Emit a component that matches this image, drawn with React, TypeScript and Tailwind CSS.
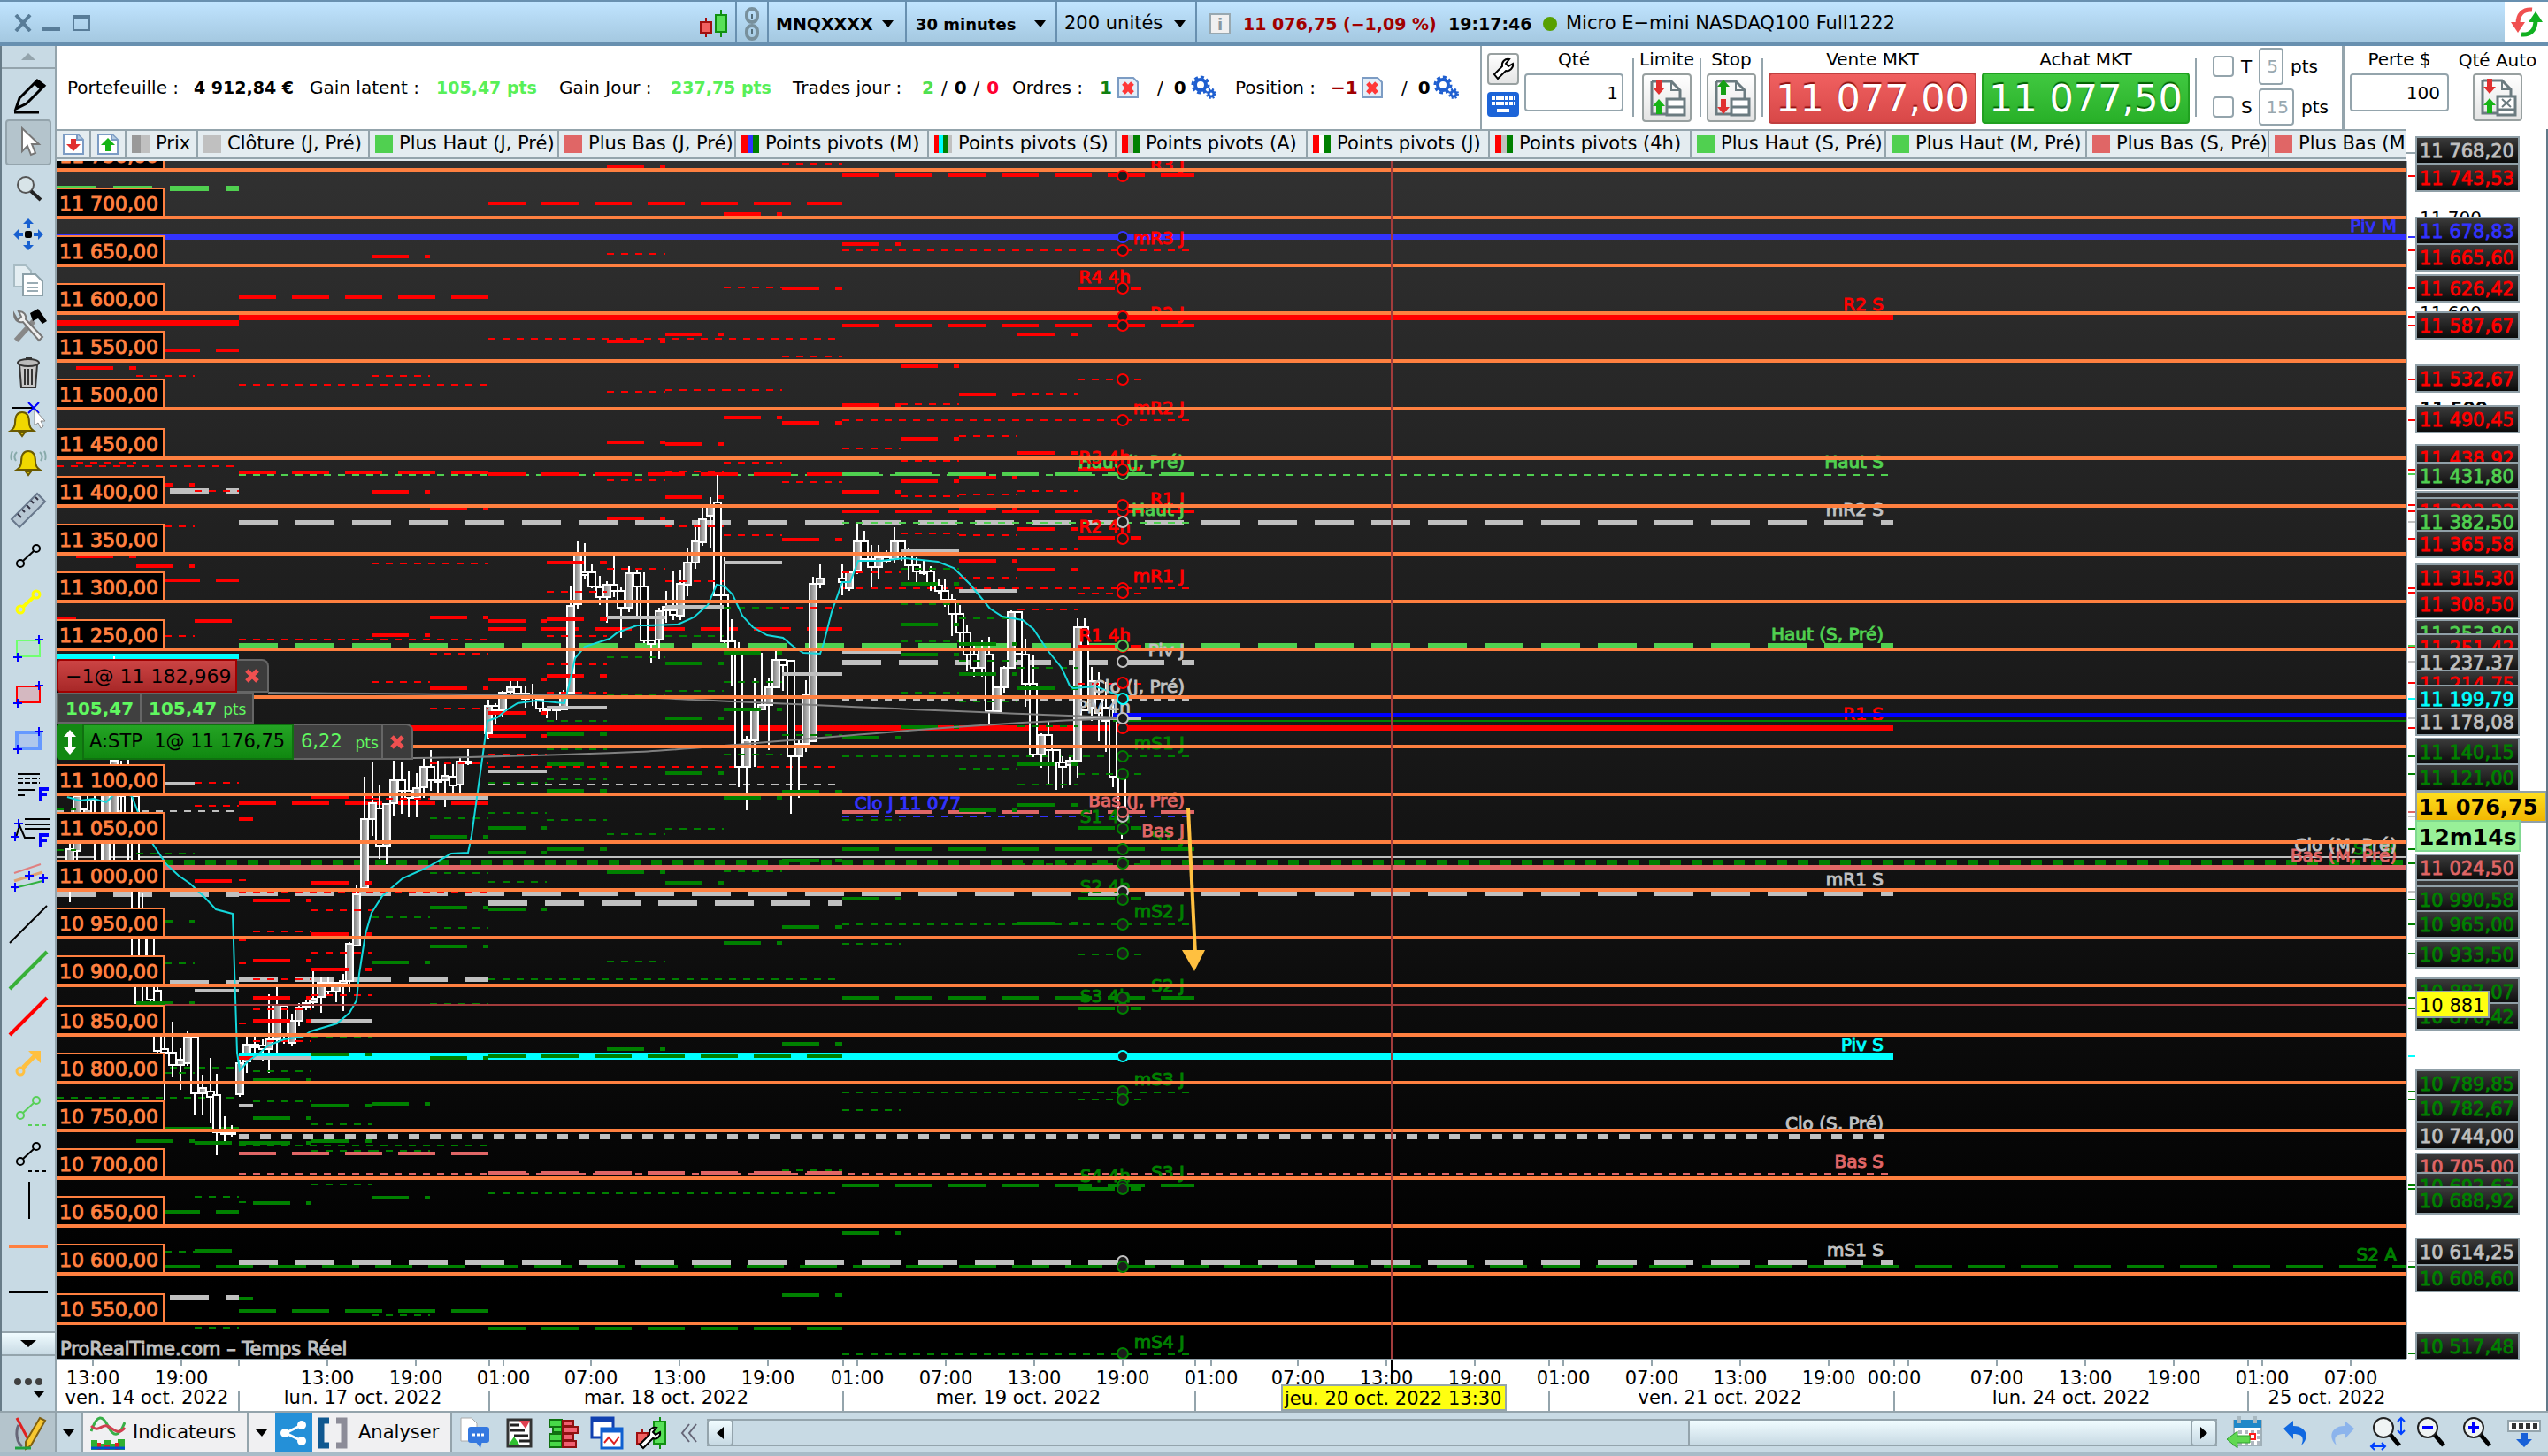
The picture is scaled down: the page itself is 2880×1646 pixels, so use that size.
import React, { useState, ReactNode } from 'react';

const RED = '#ff0000';
const GREEN = '#50d050';
const DARK_GREEN = '#008000';
const GRAY = '#c0c0c0';
const SALMON = '#e06666';
const CYAN = '#00ffff';
const BLUE = '#3333ff';
const ORANGE = '#ff8040';

type Style = 'long' | 'thin' | 'thick' | 'square' | 'solid' | 'bar' | 'line';
type Segment = [number, number, number, string, Style];

const strokes: Record<Style, { w: number; dash?: string }> = {
	long: { w: 4, dash: '42 18' },
	thin: { w: 2, dash: '8 8' },
	thick: { w: 6, dash: '44 20' },
	square: { w: 6, dash: '12 12' },
	solid: { w: 4 },
	bar: { w: 6 },
	line: { w: 2 }
};

// horizontal grid, one line every 50 points starting at 11 750
const gridLines = [
	192, 246, 300, 354, 408, 462, 518, 572, 626, 680, 734, 788, 844, 898, 952, 1006, 1060, 1114, 1170, 1224, 1278, 1332, 1386, 1440, 1496
];

// 4h pivots: [from, to, red long, red thin, green long, green thin, grey]
const columns: [number, number, number[], number[], number[], number[], number[]][] = [
	[64, 86, [699], [], [], [915, 961], []],
	[86, 154, [416, 629], [523], [], [], []],
	[154, 220, [548, 640], [425, 595, 719], [1042, 1134, 1290], [965, 1089, 1213, 1415], [886]],
	[220, 270, [702, 996], [555, 885, 911], [1292, 1414], [1353, 1501], [1120]],
	[270, 286, [926, 1196], [995, 1063, 1089, 1157], [1468, 1292], [1359], [1250]],
	[286, 352, [1018, 1086, 1128, 1154], [1053, 1107, 1141, 1177], [1221, 1264, 1292, 1360], [1211, 1245], [1196]],
	[352, 420, [901, 998, 1056, 1096], [1029, 1077, 1125], [1192, 1250, 1290], [1173, 1271, 1301, 1339], [1154]],
	[420, 486, [290, 556, 718], [425, 771, 903], [1088, 1248, 1354], [1037, 1301, 1487], []],
	[486, 552, [575, 698, 778], [739, 801, 863], [946, 1026, 1070, 1196], [925, 987, 1049, 1135], [902]],
	[552, 618, [702, 768, 806, 832], [853], [936, 964, 1028], [885, 919, 997], [872]],
	[618, 686, [636, 700, 764], [669, 719, 751, 783], [830, 864, 894, 960], [815, 847, 881, 927], [800]],
	[686, 752, [188, 386, 500, 586], [287, 443, 543, 643], [986, 1186], [743, 785, 943, 1087], [698]],
	[752, 818, [378, 502, 562], [441, 533, 595, 657], [750, 812, 874, 998], [719, 781, 937], [686]],
	[818, 884, [242, 472], [325, 441, 523, 605], [738, 802, 902, 1066], [687, 771, 853, 985], [636]],
	[884, 952, [326, 478, 610], [185, 403, 545, 687], [895, 973, 1048, 1180, 1464], [831, 1323], [762]],
	[952, 1018, [276, 458, 556], [507, 647], [834, 1016, 1394], [927, 1067, 1255], [737]],
	[1018, 1084, [414, 496, 544], [457, 521, 561, 603], [660, 706, 740, 822], [643, 683, 725, 783], [623]],
	[1084, 1150, [446, 540, 575, 634], [493, 559, 605, 653], [728, 762, 916], [699, 747, 793, 869], [668]],
	[1150, 1218, [378, 512, 598, 644], [445, 555, 621, 689], [778, 864, 910, 1044], [755, 821, 887, 977], []],
	[1218, 1290, [326, 530, 608, 731], [429, 671, 773], [936, 1016, 1140, 1344], [875, 977, 1079, 1243], [812]]
];

const levels: Segment[] = [
	// monthly
	[64, 2720, 268, BLUE, 'bar'],
	[64, 2720, 969, GRAY, 'line'],
	[64, 2720, 975, DARK_GREEN, 'square'],
	[64, 2720, 981, SALMON, 'bar'],
	// weekly
	[64, 270, 365, RED, 'bar'],
	[270, 2140, 359, RED, 'bar'],
	[270, 2140, 823, RED, 'bar'],
	[270, 2140, 537, GREEN, 'thin'],
	[270, 2140, 591, GRAY, 'thick'],
	[270, 2140, 730, GREEN, 'thick'],
	[270, 2140, 1010, GRAY, 'thick'],
	[64, 270, 742, CYAN, 'bar'],
	[270, 2140, 1285, GRAY, 'square'],
	[270, 2140, 1327, SALMON, 'thin'],
	[270, 2140, 1427, GRAY, 'thick'],
	[64, 2720, 1432, DARK_GREEN, 'long'],
	// daily
	[64, 270, 213, GREEN, 'thick'],
	[64, 270, 396, RED, 'long'],
	[64, 270, 527, RED, 'thin'],
	[64, 270, 555, GRAY, 'thick'],
	[64, 270, 656, RED, 'long'],
	[64, 270, 917, GRAY, 'thin'],
	[64, 270, 1011, GRAY, 'thick'],
	[64, 270, 1111, GRAY, 'thick'],
	[64, 270, 1207, DARK_GREEN, 'thin'],
	[64, 270, 1241, DARK_GREEN, 'thin'],
	[64, 270, 1276, DARK_GREEN, 'solid'],
	[64, 270, 1370, DARK_GREEN, 'long'],
	[64, 270, 1467, GRAY, 'thick'],
	[270, 552, 336, RED, 'long'],
	[270, 552, 435, RED, 'thin'],
	[270, 552, 534, RED, 'long'],
	[420, 552, 637, RED, 'thin'],
	[270, 552, 723, RED, 'thin'],
	[270, 552, 908, RED, 'long'],
	[270, 552, 1009, RED, 'thin'],
	[270, 552, 1107, GRAY, 'thick'],
	[270, 552, 1295, DARK_GREEN, 'thin'],
	[270, 552, 1304, SALMON, 'long'],
	[270, 552, 1482, DARK_GREEN, 'long'],
	[552, 952, 230, RED, 'long'],
	[552, 952, 383, RED, 'thin'],
	[552, 952, 536, RED, 'long'],
	[552, 952, 711, RED, 'long'],
	[552, 952, 867, RED, 'thin'],
	[552, 952, 887, GRAY, 'thin'],
	[552, 952, 1021, GRAY, 'thick'],
	[552, 952, 1107, DARK_GREEN, 'thin'],
	[552, 952, 1326, SALMON, 'long'],
	[552, 952, 1349, DARK_GREEN, 'thin'],
	[552, 952, 1502, DARK_GREEN, 'long'],
	[952, 1350, 198, RED, 'long'],
	[952, 1350, 283, RED, 'thin'],
	[952, 1350, 368, RED, 'long'],
	[952, 1350, 475, RED, 'thin'],
	[952, 1350, 536, GREEN, 'long'],
	[952, 1350, 578, RED, 'long'],
	[952, 1350, 591, GREEN, 'thin'],
	[952, 1350, 665, RED, 'thin'],
	[952, 1350, 749, GRAY, 'thick'],
	[952, 1350, 791, GRAY, 'thin'],
	[952, 1350, 855, DARK_GREEN, 'thin'],
	[952, 1350, 918, SALMON, 'long'],
	[952, 1350, 923, BLUE, 'thin'],
	[952, 1350, 960, DARK_GREEN, 'long'],
	[952, 1350, 1045, DARK_GREEN, 'thin'],
	[952, 1350, 1128, DARK_GREEN, 'long'],
	[952, 1350, 1235, DARK_GREEN, 'thin'],
	[952, 1350, 1340, DARK_GREEN, 'long'],
	[952, 1350, 1531, DARK_GREEN, 'thin']
];

// [x, high, low, body top, body bottom, rising]
const candles: [number, number, number, number, number, number][] = [
	[79, 940, 1020, 960, 975, 1], [87, 890, 975, 900, 962, 1], [95, 880, 930, 890, 915, 0], [103, 880, 925, 890, 905, 0],
	[111, 880, 990, 890, 980, 0], [120, 870, 985, 890, 975, 1], [129, 742, 975, 860, 940, 1], [137, 860, 930, 880, 900, 0],
	[145, 850, 980, 880, 950, 0], [153, 880, 1135, 900, 1100, 0], [161, 1010, 1135, 1030, 1110, 0], [170, 1050, 1140, 1060, 1130, 0],
	[178, 1110, 1190, 1120, 1188, 0], [186, 1142, 1245, 1186, 1190, 0], [195, 1155, 1218, 1190, 1204, 0], [204, 1185, 1232, 1198, 1204, 1],
	[212, 1166, 1205, 1172, 1202, 1], [220, 1170, 1260, 1172, 1236, 0], [229, 1215, 1260, 1230, 1236, 1], [238, 1196, 1270, 1234, 1240, 0],
	[245, 1214, 1306, 1238, 1280, 0], [254, 1262, 1290, 1280, 1282, 0], [262, 1272, 1285, 1280, 1282, 0], [271, 1198, 1240, 1202, 1237, 1],
	[279, 1171, 1213, 1181, 1200, 1], [288, 1168, 1190, 1181, 1184, 0], [297, 1175, 1200, 1182, 1186, 0], [304, 1124, 1213, 1175, 1186, 1],
	[313, 1116, 1190, 1136, 1175, 1], [321, 1135, 1180, 1137, 1170, 0], [330, 1146, 1183, 1154, 1179, 1], [338, 1134, 1160, 1139, 1154, 1],
	[346, 1130, 1142, 1134, 1138, 1], [354, 1098, 1140, 1129, 1133, 1], [363, 1104, 1145, 1111, 1127, 1], [371, 1104, 1125, 1111, 1121, 0],
	[380, 1110, 1133, 1111, 1121, 1], [388, 1101, 1143, 1109, 1112, 1], [395, 1065, 1121, 1067, 1109, 1], [403, 1001, 1070, 1011, 1069, 1],
	[412, 878, 1005, 926, 1004, 1], [421, 862, 945, 908, 926, 1], [429, 888, 971, 914, 956, 0], [437, 908, 977, 909, 956, 1],
	[445, 860, 922, 882, 908, 1], [454, 862, 920, 882, 894, 0], [462, 872, 924, 894, 902, 0], [471, 874, 924, 891, 902, 1],
	[479, 858, 902, 867, 890, 1], [487, 848, 894, 867, 882, 0], [495, 860, 900, 882, 884, 0], [503, 864, 912, 877, 882, 1],
	[512, 864, 902, 878, 888, 0], [520, 856, 900, 861, 887, 1], [529, 847, 865, 861, 863, 0], [552, 791, 835, 798, 829, 1],
	[560, 795, 818, 798, 803, 0], [568, 781, 811, 783, 803, 1], [577, 769, 784, 777, 782, 1], [585, 769, 785, 777, 784, 0],
	[594, 775, 800, 784, 790, 0], [602, 773, 798, 785, 789, 0], [610, 788, 805, 791, 801, 0], [618, 800, 812, 801, 803, 0],
	[629, 800, 814, 801, 803, 0], [637, 780, 803, 783, 802, 1], [645, 663, 783, 685, 783, 1], [653, 612, 688, 628, 683, 1],
	[661, 614, 654, 647, 650, 0], [669, 638, 665, 647, 663, 0], [678, 651, 684, 664, 675, 0], [686, 657, 704, 661, 675, 1],
	[694, 628, 675, 661, 668, 0], [702, 664, 721, 668, 687, 0], [711, 640, 692, 648, 687, 1], [720, 644, 700, 648, 663, 0],
	[728, 647, 727, 663, 724, 0], [736, 723, 749, 724, 728, 0], [745, 687, 745, 691, 723, 1], [753, 668, 704, 686, 690, 1],
	[761, 646, 701, 690, 695, 0], [769, 644, 701, 660, 696, 1], [777, 620, 674, 636, 661, 1], [786, 595, 643, 612, 636, 1],
	[794, 573, 617, 587, 613, 1], [803, 562, 620, 573, 583, 1], [811, 537, 673, 568, 673, 0], [819, 630, 727, 673, 725, 0],
	[827, 700, 776, 725, 740, 0], [835, 726, 890, 740, 867, 0], [844, 832, 916, 837, 867, 1], [853, 766, 867, 803, 837, 1],
	[861, 738, 803, 797, 802, 1], [869, 767, 848, 777, 797, 1], [877, 736, 777, 746, 777, 1], [885, 745, 781, 746, 752, 0],
	[894, 746, 920, 747, 855, 0], [903, 835, 902, 841, 855, 1], [911, 769, 850, 785, 841, 1], [919, 652, 838, 660, 838, 1],
	[927, 638, 665, 654, 660, 1], [952, 638, 673, 654, 658, 0], [960, 645, 668, 647, 665, 1], [969, 592, 649, 612, 645, 1],
	[977, 600, 634, 612, 632, 0], [985, 616, 664, 632, 641, 0], [993, 616, 654, 630, 641, 1], [1002, 622, 637, 630, 634, 0],
	[1011, 596, 636, 612, 632, 1], [1019, 610, 634, 612, 628, 0], [1027, 620, 656, 628, 639, 0], [1036, 630, 658, 639, 646, 0],
	[1044, 634, 650, 646, 648, 0], [1052, 640, 668, 646, 662, 0], [1061, 655, 672, 662, 668, 0], [1068, 654, 686, 668, 678, 0],
	[1076, 672, 719, 678, 694, 0], [1085, 684, 735, 694, 715, 0], [1093, 706, 759, 715, 740, 0], [1101, 730, 765, 740, 755, 0],
	[1110, 724, 765, 735, 755, 1], [1118, 720, 818, 740, 804, 0], [1127, 775, 806, 777, 804, 1], [1135, 753, 783, 755, 777, 1],
	[1143, 690, 755, 692, 755, 1], [1151, 692, 739, 692, 739, 0], [1159, 722, 799, 740, 773, 0], [1168, 740, 856, 773, 853, 0],
	[1177, 829, 868, 831, 853, 1], [1185, 816, 886, 831, 848, 0], [1194, 848, 893, 848, 862, 0], [1201, 855, 891, 862, 867, 0],
	[1209, 856, 888, 860, 865, 1], [1218, 699, 880, 709, 860, 1], [1226, 699, 803, 709, 803, 0], [1234, 754, 815, 770, 800, 1],
	[1242, 760, 838, 790, 806, 0], [1250, 771, 850, 800, 815, 0], [1258, 790, 890, 812, 878, 0], [1268, 876, 949, 878, 923, 0]
];

const average =
	'76,901 90,905 106,903 120,907 133,894 149,900 156,918 172,953 188,977 202,990 215,999 230,1013 244,1028 263,1033 268,1190 271,1210 280,1200 294,1190 303,1182 321,1175 342,1172 351,1166 381,1157 395,1145 403,1131 406,1101 413,1056 420,1032 432,1013 455,993 482,981 510,965 529,964 533,945 551,815 562,811 572,803 585,795 606,792 638,795 643,775 650,744 661,731 689,722 698,715 720,707 731,707 766,706 784,698 800,684 810,661 819,663 828,672 839,696 851,709 867,718 885,721 897,731 908,738 927,739 931,727 940,692 952,658 961,658 970,634 995,634 1023,631 1060,635 1078,642 1096,660 1119,688 1133,697 1156,701 1168,711 1184,735 1200,755 1209,775 1213,778 1239,776 1269,788';

// markers on the last bar, they also give the ticks of the price axis
const markers: [number, string][] = [
	[199, RED], [268, BLUE], [283, RED], [326, RED], [358, RED], [368, RED], [429, RED], [475, RED], [536, GREEN], [531, RED],
	[578, RED], [571, RED], [590, GRAY], [609, RED], [665, RED], [670, RED], [731, RED], [730, GREEN], [748, GRAY], [772, RED],
	[790, CYAN], [823, RED], [812, GRAY], [855, DARK_GREEN], [875, DARK_GREEN], [923, GRAY], [918, SALMON], [937, DARK_GREEN],
	[960, DARK_GREEN], [976, DARK_GREEN], [1008, GRAY], [1017, DARK_GREEN], [1045, DARK_GREEN], [1078, DARK_GREEN],
	[1128, DARK_GREEN], [1140, DARK_GREEN], [1194, CYAN], [1234, DARK_GREEN], [1243, DARK_GREEN], [1340, DARK_GREEN],
	[1344, DARK_GREEN], [1426, GRAY], [1432, DARK_GREEN], [1530, DARK_GREEN]
];

// right aligned names
const names: [string, number, number, string][] = [
	['R3 J', 1339, 193, RED], ['mR3 J', 1339, 276, RED], ['R2 J', 1339, 361, RED], ['mR2 J', 1339, 468, RED],
	['Haut (J, Pré)', 1339, 529, GREEN], ['R1 J', 1339, 571, RED], ['Haut J', 1339, 583, GREEN], ['mR1 J', 1339, 658, RED],
	['Piv J', 1339, 742, GRAY], ['Clo (J, Pré)', 1339, 783, GRAY], ['mS1 J', 1339, 847, DARK_GREEN],
	['Bas (J, Pré)', 1339, 912, SALMON], ['S1 J', 1339, 953, DARK_GREEN], ['Bas J', 1339, 946, SALMON],
	['mS2 J', 1339, 1037, DARK_GREEN], ['S2 J', 1339, 1121, DARK_GREEN], ['mS3 J', 1339, 1227, DARK_GREEN],
	['S3 J', 1339, 1332, DARK_GREEN], ['mS4 J', 1339, 1524, DARK_GREEN],
	['R4 4h', 1278, 320, RED], ['R3 4h', 1278, 524, RED], ['R2 4h', 1278, 602, RED], ['R1 4h', 1278, 725, RED],
	['Piv 4h', 1278, 806, GRAY], ['S1 4h', 1278, 930, DARK_GREEN], ['S2 4h', 1278, 1009, DARK_GREEN],
	['S3 4h', 1278, 1133, DARK_GREEN], ['S4 4h', 1278, 1336, DARK_GREEN],
	['Clo J 11 077', 1086, 915, BLUE],
	['R2 S', 2129, 351, RED], ['Haut S', 2129, 529, GREEN], ['mR2 S', 2129, 583, GRAY], ['Haut (S, Pré)', 2129, 724, GREEN],
	['R1 S', 2129, 814, RED], ['mR1 S', 2129, 1001, GRAY], ['Piv S', 2129, 1188, CYAN], ['Clo (S, Pré)', 2129, 1277, GRAY],
	['Bas S', 2129, 1320, SALMON], ['mS1 S', 2129, 1420, GRAY],
	['Piv M', 2709, 262, BLUE], ['S1 M', 2709, 966, DARK_GREEN], ['Bas (M, Pré)', 2709, 974, SALMON], ['Clo (M, Pré)', 2709, 962, GRAY],
	['S2 A', 2709, 1425, DARK_GREEN]
];

const tags: [string, number, string][] = [
	['11 768,20', 154, GRAY], ['11 743,53', 185, RED], ['11 678,83', 245, BLUE], ['11 665,60', 275, RED], ['11 626,42', 310, RED],
	['11 587,67', 352, RED], ['11 532,67', 412, RED], ['11 490,45', 458, RED], ['11 438,92', 502, RED], ['11 431,80', 522, GREEN],
	['11 398,42', 555, RED], ['11 393,33', 562, RED], ['11 382,50', 574, GREEN], ['11 365,58', 599, RED], ['11 315,30', 637, RED],
	['11 308,50', 667, RED], ['11 253,80', 700, GREEN], ['11 251,42', 716, RED], ['11 237,37', 733, GRAY], ['11 214,75', 757, RED],
	['11 199,79', 774, CYAN], ['11 178,08', 800, GRAY], ['11 140,15', 834, DARK_GREEN], ['11 121,00', 863, DARK_GREEN],
	['11 024,50', 965, SALMON], ['10 999,00', 994, GRAY], ['10 990,58', 1001, DARK_GREEN], ['10 965,00', 1029, DARK_GREEN],
	['10 933,50', 1063, DARK_GREEN], ['10 887,07', 1105, DARK_GREEN], ['10 876,42', 1133, DARK_GREEN],
	['10 789,85', 1209, DARK_GREEN], ['10 782,67', 1237, DARK_GREEN], ['10 744,00', 1268, GRAY], ['10 705,00', 1303, SALMON],
	['10 692,63', 1325, DARK_GREEN], ['10 688,92', 1341, DARK_GREEN], ['10 614,25', 1399, GRAY], ['10 608,60', 1429, DARK_GREEN],
	['10 517,48', 1506, DARK_GREEN]
];

const hours: [string, number][] = [
	['13:00', 105], ['19:00', 205], ['13:00', 370], ['19:00', 470], ['01:00', 569], ['07:00', 668], ['13:00', 768], ['19:00', 868],
	['01:00', 969], ['07:00', 1069], ['13:00', 1169], ['19:00', 1269], ['01:00', 1369], ['07:00', 1467], ['13:00', 1567],
	['19:00', 1667], ['01:00', 1767], ['07:00', 1867], ['13:00', 1967], ['19:00', 2067], ['00:00', 2141], ['', 2157],
	['07:00', 2257], ['13:00', 2357], ['19:00', 2457], ['01:00', 2557], ['07:00', 2657]
];

const days: [string, number][] = [
	['ven. 14 oct. 2022', 166], ['lun. 17 oct. 2022', 410], ['mar. 18 oct. 2022', 753], ['mer. 19 oct. 2022', 1151],
	['ven. 21 oct. 2022', 1944], ['lun. 24 oct. 2022', 2341], ['25 oct. 2022', 2630]
];

const legend: { name: string; width: string; colors: string[] }[] = [
	{ name: 'Prix', width: 'w-[81px]', colors: ['#999999', GRAY] },
	{ name: 'Clôture (J, Pré)', width: 'w-[194px]', colors: [GRAY] },
	{ name: 'Plus Haut (J, Pré)', width: 'w-[214px]', colors: [GREEN] },
	{ name: 'Plus Bas (J, Pré)', width: 'w-[200px]', colors: [SALMON] },
	{ name: 'Points pivots (M)', width: 'w-[218px]', colors: [RED, BLUE, DARK_GREEN] },
	{ name: 'Points pivots (S)', width: 'w-[212px]', colors: [RED, CYAN, DARK_GREEN, GRAY] },
	{ name: 'Points pivots (A)', width: 'w-[216px]', colors: [RED, GRAY, DARK_GREEN] },
	{ name: 'Points pivots (J)', width: 'w-[206px]', colors: [RED, '#ffffff', DARK_GREEN] },
	{ name: 'Points pivots (4h)', width: 'w-[228px]', colors: [RED, GRAY, DARK_GREEN] },
	{ name: 'Plus Haut (S, Pré)', width: 'w-[220px]', colors: [GREEN] },
	{ name: 'Plus Haut (M, Pré)', width: 'w-[227px]', colors: [GREEN] },
	{ name: 'Plus Bas (S, Pré)', width: 'w-[206px]', colors: [SALMON] },
	{ name: 'Plus Bas (M, Pré)', width: 'w-[214px]', colors: [SALMON] }
];

function formatLevel(i: number): string {
	const value = 11750 - i * 50;
	return `${Math.floor(value / 1000)} ${String(value % 1000).padStart(3, '0')},00`;
}

function Svg({ w = 48, h = 48, children }: { w?: number; h?: number; children: ReactNode }) {
	return (
		<svg width={w} height={h} viewBox={`0 0 ${w} ${h}`} fill="none" className="block shrink-0" aria-hidden="true">
			{children}
		</svg>
	);
}

function Caret() {
	return (
		<Svg w={14} h={10}>
			<path d="M0 1h13l-6 8z" fill="#000" />
		</Svg>
	);
}

function DeleteIcon() {
	return (
		<Svg w={26} h={26}>
			<path d="M2 2h17l5 5v17H2z" fill="#e4eef8" stroke="#7c9cc4" strokeWidth="2" />
			<path d="M8 8l10 11M18 8L8 19" stroke="#ff3838" strokeWidth="5" />
		</Svg>
	);
}

function GearsIcon() {
	return (
		<Svg w={30} h={28}>
			<circle cx="11" cy="11" r="6" stroke="#1f5fd0" strokeWidth="4" />
			<circle cx="11" cy="11" r="9" stroke="#1f5fd0" strokeWidth="3" strokeDasharray="4 3" />
			<circle cx="23" cy="21" r="3" stroke="#1f5fd0" strokeWidth="3" />
			<circle cx="23" cy="21" r="5" stroke="#1f5fd0" strokeWidth="2" strokeDasharray="2 2" />
		</Svg>
	);
}

function PageArrow({ up }: { up?: boolean }) {
	return (
		<Svg w={26} h={26}>
			<path d="M2 2h16l6 6v16H2z" fill="#fff" stroke="#7c9cc4" strokeWidth="2" />
			<path d="M17 2v6h7" fill="#b4cce4" stroke="#7c9cc4" strokeWidth="2" />
			{up ? (
				<path d="M13 6l8 8h-5v7h-6v-7H5z" fill="#16b416" />
			) : (
				<path d="M13 21l8-8h-5V7h-6v6H5z" fill="#e03030" />
			)}
		</Svg>
	);
}

function OrderIcon({ first, second, auto }: { first: string; second: string; auto?: boolean }) {
	return (
		<Svg w={46} h={46}>
			<path d="M6 4h22l10 10v9M6 4v37h17" stroke="#6b7b80" strokeWidth="3" />
			<path d="M28 4v10h10" stroke="#6b7b80" strokeWidth="2" />
			<path d={first === 'down' ? 'M11 2h6v9h4l-7 8-7-8h4z' : 'M11 19h6v-9h4l-7-8-7 8h4z'} fill={first === 'down' ? '#e03030' : '#16a016'} />
			<path d={second === 'down' ? 'M11 24h6v9h4l-7 8-7-8h4z' : 'M11 41h6v-9h4l-7-8-7 8h4z'} fill={second === 'down' ? '#e03030' : '#16b416'} />
			{auto ? (
				<>
					<path d="M23 22h20v15H23zM23 37h20v6H23z" fill="#fff" stroke="#6b7b80" strokeWidth="3" />
					<path d="M28 25l10 9M38 25l-10 9" stroke="#6b7b80" strokeWidth="2" />
				</>
			) : (
				<path d="M23 24h20v9H23zM23 33h20v9H23z" fill="#fff" stroke="#6b7b80" strokeWidth="3" />
			)}
		</Svg>
	);
}

function Plus({ x, y }: { x: number; y: number }) {
	return <path d={`M${x - 5} ${y}h10M${x} ${y - 5}v10`} stroke="#0000ff" strokeWidth="2" />;
}

function Segment2({ color, dots, wide }: { color: string; dots?: boolean; wide?: boolean }) {
	return (
		<Svg>
			<circle cx="15" cy="32" r="4" stroke={color} strokeWidth={wide ? 3 : 2} />
			<circle cx="33" cy="15" r="4" stroke={color} strokeWidth={wide ? 3 : 2} />
			<path d="M18 29L30 18" stroke={color} strokeWidth={wide ? 4 : 2} />
			{dots && <path d="M24 43h20" stroke={color} strokeWidth="2" strokeDasharray="4 4" />}
		</Svg>
	);
}

function Zone({ stroke, fill, w }: { stroke: string; fill: string; w: number }) {
	return (
		<Svg>
			<rect x="11" y="15" width="26" height="18" fill={fill} stroke={stroke} strokeWidth={w} />
			<Plus x={36} y={14} />
			<Plus x={12} y={34} />
		</Svg>
	);
}

const Bell = () => (
	<path d="M24 9c7 0 8 6 8 12 0 5 2 7 5 9H11c3-2 5-4 5-9 0-6 1-12 8-12zM21 32h6l-3 4z" fill="#f0d800" stroke="#6a5a00" strokeWidth="2" />
);

const tools: [string, ReactNode][] = [
	['Dessiner', <Svg><path d="M10 38l4-12L34 6l8 6-20 20zM8 42h28" stroke="#000" strokeWidth="3" /><path d="M30 10l5-5 8 6-5 6z" fill="#000" /></Svg>],
	['Curseur', <Svg><path d="M17 8v26l6-6 4 10 5-2-4-10h8z" fill="#fff" stroke="#777" strokeWidth="2" /></Svg>],
	['Zoom', <Svg><circle cx="21" cy="20" r="9" fill="#d8e4e8" stroke="#555" strokeWidth="2" /><path d="M27 27l11 10" stroke="#222" strokeWidth="4" /></Svg>],
	['Déplacer', <Svg><rect x="20" y="20" width="8" height="8" fill="#000" rx="2" /><path d="M24 6l6 6h-4v5h-4v-5h-4zM24 42l6-6h-4v-5h-4v5h-4zM7 24l6-6v4h5v4h-5v4zM41 24l-6-6v4h-5v4h5v4z" fill="#1860d0" /></Svg>],
	['Copier', <Svg><path d="M8 7h13l6 6v18H8z" fill="#e4eef2" stroke="#a8bcc4" strokeWidth="2" /><path d="M18 17h14l8 8v16H18z" fill="#fff" stroke="#8ca0a8" strokeWidth="2" /><path d="M23 27h12M23 32h12M23 36h12" stroke="#9aacb4" strokeWidth="2" /></Svg>],
	['Outils', <Svg><path d="M10 40l20-22" stroke="#888" strokeWidth="6" /><path d="M8 10c0 8 6 10 10 9l18 21 4-4-19-20c1-5-2-9-8-9l3 6-4 4z" fill="#eee" stroke="#777" strokeWidth="2" /><path d="M26 9l9-5 10 14-5 3-5-6-6 3z" fill="#000" /></Svg>],
	['Supprimer', <Svg><path d="M14 15h20l-2 26H16z" fill="#c8c8c8" stroke="#333" strokeWidth="2" /><ellipse cx="24" cy="13" rx="12" ry="4" fill="#bbb" stroke="#333" strokeWidth="2" /><path d="M20 20v18M24 20v18M28 20v18M21 8h7" stroke="#333" strokeWidth="2" /></Svg>],
	['Alerte au clic', <Svg><g transform="translate(-7 8)"><Bell /></g><path d="M5 12h26" stroke="#000" strokeWidth="2" /><path d="M24 6l12 12M36 6L24 18" stroke="#0000ff" strokeWidth="2" /><path d="M31 14v18l4-3 3 6 3-2-3-6h5z" fill="#fff" stroke="#888" /></Svg>],
	['Alerte', <Svg><Bell /><path d="M11 10c-3 3-3 7-1 10M6 9c-2 4-2 7-1 10M37 10c3 3 3 7 1 10M42 9c2 4 2 7 1 10" stroke="#8aa" strokeWidth="2" /></Svg>],
	['Règle', <Svg><path d="M5 34L34 5l9 9-29 29z" fill="#b8c8d4" stroke="#68788c" strokeWidth="2" /><path d="M12 28l4 4M17 23l3 3M22 18l4 4M27 13l3 3M32 9l3 3" stroke="#334" strokeWidth="2" /></Svg>],
	['Segment', <Segment2 color="#000" />],
	['Segment jaune', <Segment2 color="#ffff00" wide />],
	['Zone verte', <Zone stroke="#70ff70" fill="#bce0d4" w={2} />],
	['Zone rouge', <Zone stroke="#ff0000" fill="#d4b8c0" w={2} />],
	['Zone bleue', <Zone stroke="#6699ff" fill="#b0c8ec" w={4} />],
	['Texte', <Svg><path d="M12 10h25M12 28h20M12 34h8" stroke="#000" strokeWidth="2" /><path d="M12 15h25M12 20h25" stroke="#000" strokeWidth="2" strokeDasharray="6 2" /><path d="M38 40V27h9M38 33h7" stroke="#0000ff" strokeWidth="4" /></Svg>],
	['Texte ancré', <Svg><path d="M20 9h28M20 15h28M20 20h28M10 30l4-14 6 14h12" stroke="#000" strokeWidth="2" /><path d="M38 40V27h9M38 33h7" stroke="#0000ff" strokeWidth="4" /><Plus x={13} y={14} /><Plus x={9} y={29} /></Svg>],
	['Canal', <Svg><path d="M8 18l30-10" stroke="#e08080" strokeWidth="2" /><path d="M8 27l32-10" stroke="#e0a070" strokeWidth="3" /><path d="M8 35l32-8" stroke="#30b040" strokeWidth="2" /><Plus x={25} y={21} /><Plus x={41} y={24} /><Plus x={9} y={34} /></Svg>],
	['Droite', <Svg><path d="M3 45L45 3" stroke="#000" strokeWidth="2" /></Svg>],
	['Droite verte', <Svg><path d="M3 45L45 3" stroke="#38b038" strokeWidth="4" /></Svg>],
	['Droite rouge', <Svg><path d="M3 45L45 3" stroke="#ff0000" strokeWidth="4" /></Svg>],
	['Flèche', <Svg><circle cx="15" cy="34" r="4" stroke="#ffc040" strokeWidth="3" /><path d="M18 30l14-14" stroke="#ffc040" strokeWidth="5" /><path d="M24 11h14v14z" fill="#ffc040" /></Svg>],
	['Segment vert', <Segment2 color="#58d058" dots />],
	['Segment pointillé', <Segment2 color="#000" dots />],
	['Verticale', <Svg><path d="M25 3v42" stroke="#000" strokeWidth="2" /></Svg>],
	['Horizontale orange', <Svg><path d="M2 24h44" stroke="#ff8040" strokeWidth="4" /></Svg>],
	['Horizontale', <Svg><path d="M2 24h44" stroke="#000" strokeWidth="2" /></Svg>]
];

function Level({ segment }: { segment: Segment }) {
	const [x1, x2, y, color, style] = segment;
	return <line x1={x1} x2={x2} y1={y} y2={y} stroke={color} strokeWidth={strokes[style].w} strokeDasharray={strokes[style].dash} />;
}

function Plot() {
	return (
		<svg viewBox="64 182 2656 1354" className="block h-auto w-full" role="img" aria-label="MNQXXXX 30 minutes">
			<defs>
				<linearGradient id="night" x1="0" y1="0" x2="0" y2="1">
					<stop offset="0" stopColor="#313131" />
					<stop offset="0.94" stopColor="#000000" />
				</linearGradient>
				<linearGradient id="rise" x1="0" y1="0" x2="1" y2="0">
					<stop offset="0" stopColor="#777777" />
					<stop offset="1" stopColor="#cccccc" />
				</linearGradient>
			</defs>
			<rect x="64" y="182" width="2656" height="1354" fill="url(#night)" />
			{levels.map((s, i) => (
				<Level key={i} segment={s} />
			))}
			{candles.map(([x, high, low, top, bottom, up]) => (
				<g key={x} stroke="#ffffff" strokeWidth="2">
					<path d={`M${x} ${high}V${top}M${x} ${bottom}V${low}`} />
					<rect x={x - 4} y={top} width="8" height={bottom - top} fill={up ? 'url(#rise)' : '#0c0c0c'} />
				</g>
			))}
			<rect x="270" y="1190" width="1870" height="8" fill={CYAN} />
			<Level segment={[552, 952, 1194, DARK_GREEN, 'long']} />
			{columns.map(([x1, x2, redLong, redThin, greenLong, greenThin, grey]) => (
				<g key={x1}>
					{grey.map(y => <Level key={y} segment={[x1, x2, y, GRAY, 'solid']} />)}
					{redLong.map(y => <Level key={y} segment={[x1, x2, y, RED, 'long']} />)}
					{redThin.map(y => <Level key={y} segment={[x1, x2, y, RED, 'thin']} />)}
					{greenLong.map(y => <Level key={y} segment={[x1, x2, y, DARK_GREEN, 'long']} />)}
					{greenThin.map(y => <Level key={y} segment={[x1, x2, y, DARK_GREEN, 'thin']} />)}
				</g>
			))}
			<polyline points={average} fill="none" stroke="#14d8dc" strokeWidth="2" />
			<g fontSize="20" textAnchor="end" strokeWidth="1">
				{names.map(([name, x, y, color]) => (
					<text key={name + x} x={x} y={y} fill={color} stroke={color}>
						{name}
					</text>
				))}
			</g>
			<path d="M303 783C500 785 650 785 720 788S1100 806 1269 811M467 857C560 856 640 853 720 850S1080 817 1269 812" stroke="#808080" strokeWidth="2" fill="none" />
			{gridLines.map((y, i) => (
				<g key={y}>
					<path d={`M64 ${y}H2720`} stroke={ORANGE} strokeWidth="4" />
					<rect x="62" y={y - 33} width="123" height="33" fill="#000000" stroke={ORANGE} strokeWidth="2" />
					<path d={`M64 ${y}H186`} stroke={ORANGE} strokeWidth="4" />
					<text x="67" y={y - 8} fontSize="22" fill={ORANGE} stroke={ORANGE} strokeWidth="1">
						{formatLevel(i)}
					</text>
				</g>
			))}
			<path d="M1258 808H2720" stroke="#0000ff" strokeWidth="4" />
			<path d="M1258 815H2720" stroke={DARK_GREEN} strokeWidth="2" />
			{markers.map(([y, color]) => (
				<circle key={y} cx="1269" cy={y} r="6" fill="#1c1c1c" stroke={color} strokeWidth="2" />
			))}
			<path d="M1343 914L1351 1078" stroke="#ffc040" strokeWidth="4" />
			<path d="M1336 1074h26l-12 24z" fill="#ffc040" />
			<path d="M1573 182V1536M186 1136H2720" stroke="#a23c3c" strokeWidth="2" />
			<text x="68" y="1532" fontSize="21" fill={GRAY} stroke={GRAY} strokeWidth="1">
				ProRealTime.com – Temps Réel
			</text>
		</svg>
	);
}

function PriceAxis() {
	return (
		<svg viewBox="2720 146 160 1449" className="block h-auto w-full" role="img" aria-label="Échelle des prix">
			<defs>
				<linearGradient id="tag" x1="0" y1="0" x2="0" y2="1">
					<stop offset="0" stopColor="#3c3c3c" />
					<stop offset="1" stopColor="#080808" />
				</linearGradient>
				<linearGradient id="gold" x1="0" y1="0" x2="0" y2="1">
					<stop offset="0" stopColor="#ffe020" />
					<stop offset="1" stopColor="#f0b400" />
				</linearGradient>
			</defs>
			<rect x="2720" y="146" width="160" height="1449" fill="#ffffff" />
			<path d="M2720 182V1536M2720 173h10" stroke="#94a4ac" strokeWidth="2" />
			{markers.map(([y, color]) => (
				<path key={y} d={`M2722 ${y}h8`} stroke={color} strokeWidth="2" />
			))}
			<g fontSize="20">
				<text x="2735" y="253">11 700</text>
				<text x="2735" y="360">11 600</text>
				<text x="2735" y="468" fontWeight="bold">11 500</text>
			</g>
			{tags.map(([value, y, color]) => (
				<g key={value}>
					<rect x="2731" y={y + 1} width="116" height="30" fill="url(#tag)" stroke="#90a0a8" strokeWidth="2" />
					<text x="2735" y={y + 24} fontSize="21" fill={color} stroke={color} strokeWidth="0.8">
						{value}
					</text>
				</g>
			))}
			<rect x="2731" y="895" width="147" height="34" fill="url(#gold)" stroke="#90a0a8" strokeWidth="2" />
			<text x="2734" y="921" fontSize="24" fontWeight="bold">11 076,75</text>
			<rect x="2731" y="928" width="117" height="34" fill="#98f098" stroke="#80d890" strokeWidth="2" />
			<text x="2734" y="955" fontSize="25" fontWeight="bold">12m14s</text>
			<rect x="2731" y="1121" width="82" height="29" fill="#ffff10" stroke="#90a0a8" strokeWidth="2" />
			<text x="2735" y="1144" fontSize="21">10 881</text>
			<path d="M2879 146V1595" stroke="#607888" strokeWidth="2" />
		</svg>
	);
}

function TimeAxis() {
	return (
		<svg viewBox="64 1536 2656 59" className="block h-auto w-full" role="img" aria-label="Échelle du temps">
			<rect x="64" y="1536" width="2656" height="59" fill="#ffffff" />
			<path d="M64 1537H2720" stroke="#94a4ac" strokeWidth="2" />
			<g fontSize="21" textAnchor="middle">
				{hours.map(([hour, x]) => (
					<g key={x}>
						<path d={`M${x} 1537v7`} stroke="#94a4ac" strokeWidth="2" />
						<text x={x} y="1565">{hour}</text>
					</g>
				))}
				{days.map(([day, x]) => (
					<text key={day} x={x} y="1587">{day}</text>
				))}
			</g>
			{[270, 553, 953, 1351, 1751, 2141, 2541].map(x => (
				<path key={x} d={`M${x} 1537v7M${x} 1572v23`} stroke="#94a4ac" strokeWidth="2" />
			))}
			<path d="M1573 1537v30" stroke="#000000" strokeWidth="2" />
			<rect x="1449" y="1566" width="253" height="28" fill="#ffff10" stroke="#94a4ac" strokeWidth="2" />
			<text x="1452" y="1588" fontSize="21">jeu. 20 oct. 2022 13:30</text>
		</svg>
	);
}

function Cross() {
	return (
		<Svg w={18} h={18}>
			<path d="M3 3l12 12M15 3L3 15" stroke="#f05050" strokeWidth="5" />
		</Svg>
	);
}

function Position() {
	return (
		<div className="absolute left-0 top-[563px] flex flex-col items-start whitespace-pre">
			<div className="flex h-[38px]">
				<span className="flex w-[204px] items-center rounded-l border-2 border-[#a00000] bg-linear-to-b from-[#cc4444] to-[#a82828] pl-2 text-[22px] text-black">−1@ 11 182,969</span>
				<button type="button" aria-label="Fermer la position" className="flex w-9 items-center justify-center rounded-tr-lg border-2 border-l-0 border-[#666] bg-[#3c3c3c]">
					<Cross />
				</button>
			</div>
			<div className="flex h-[35px] text-[20px] font-bold text-[#60f860]">
				<span className="flex w-[95px] items-center border-2 border-r border-[#666] bg-[#404040] pl-2">105,47</span>
				<span className="flex w-[128px] items-center border-2 border-l border-[#666] bg-[#404040] pl-2">
					105,47 <small className="pt-1 text-[17px] font-normal">pts</small>
				</span>
			</div>
			<div className="flex h-[41px]">
				<span className="flex w-[29px] items-center justify-center rounded-l bg-[#128812]">
					<Svg w={14} h={28}>
						<path d="M7 0l7 8H9v12h5l-7 8-7-8h5V8H0z" fill="#fff" />
					</Svg>
				</span>
				<span className="flex w-[239px] items-center border-2 border-[#107010] bg-linear-to-b from-[#24a424] to-[#108810] pl-1.5 text-[21px] text-black">A:STP  1@ 11 176,75</span>
				<span className="flex w-[99px] items-center gap-2 border-y-2 border-[#666] bg-[#404040] pl-2 text-[21px] text-[#60f860]">
					6,22 <small className="pt-1 text-[17px]">pts</small>
				</span>
				<button type="button" aria-label="Annuler le stop" className="flex w-9 items-center justify-center rounded-tr-lg border-2 border-[#666] bg-[#3c3c3c]">
					<Cross />
				</button>
			</div>
		</div>
	);
}

function TitleBar() {
	return (
		<header className="flex h-[52px] items-stretch border-y-2 border-b-4 border-[#6890b0] bg-linear-to-b from-[#c0e4ff] to-[#a4c8e0] text-[20px] whitespace-nowrap">
			<div className="flex w-[791px] items-center gap-2 pt-0.5 pl-4 text-[#587c98]">
				<button type="button" aria-label="Fermer"><Svg w={20} h={20}><path d="M2 1l16 18M18 1L2 19" stroke="#587c98" strokeWidth="4" /></Svg></button>
				<button type="button" aria-label="Réduire" className="ml-1"><Svg w={20} h={20}><path d="M0 17h20" stroke="#587c98" strokeWidth="4" /></Svg></button>
				<button type="button" aria-label="Agrandir" className="ml-1"><Svg w={22} h={20}><path d="M3 2h18v16H3zM3 4h18" stroke="#587c98" strokeWidth="2" /></Svg></button>
			</div>
			<div className="flex w-10 items-center pt-1">
				<Svg w={32} h={34}>
					<path d="M7 10v22" stroke="#a01010" strokeWidth="2" /><rect x="1" y="15" width="12" height="12" fill="#f06060" stroke="#a01010" strokeWidth="2" />
					<path d="M24 1v31" stroke="#109010" strokeWidth="2" /><rect x="18" y="7" width="12" height="19" fill="#58e058" stroke="#109010" strokeWidth="2" />
				</Svg>
			</div>
			<div className="flex w-9 items-center justify-center border-l-2 border-[#6890b0] pt-1">
				<Svg w={18} h={38}>
					<rect x="3" y="2" width="12" height="15" rx="6" stroke="#78909c" strokeWidth="4" /><rect x="3" y="21" width="12" height="15" rx="6" stroke="#78909c" strokeWidth="4" />
					<path d="M9 8v5M9 25v5" stroke="#546e7a" strokeWidth="2" />
				</Svg>
			</div>
			<button type="button" className="flex w-[156px] items-center justify-between border-l-2 border-[#6890b0] pt-1 pr-3 pl-2 text-[19px] font-bold">MNQXXXX <Caret /></button>
			<button type="button" className="flex w-[170px] items-center justify-between border-l-2 border-[#6890b0] pt-1 pr-2.5 pl-2.5 text-[18px] font-bold">30 minutes <Caret /></button>
			<button type="button" className="flex w-[158px] items-center justify-between border-l-2 border-[#6890b0] pt-1 pr-2.5 pl-2 text-[21px]">200 unités <Caret /></button>
			<div className="flex items-center gap-2.5 border-l-2 border-[#6890b0] pt-1 pl-3.5">
				<span className="mr-1 flex h-6 w-6 items-center justify-center border-2 border-[#98a8b0] bg-[#f0f0f0] text-[18px] font-bold text-[#8898a0]">i</span>
				<span className="w-[222px] text-[19px] font-bold text-[#a00000]">11 076,75 (−1,09 %)</span>
				<span className="w-[97px] text-[19px] font-bold">19:17:46</span>
				<span className="h-4 w-4 rounded-full bg-[#58a000]" />
				<span className="text-[21px]">Micro E−mini NASDAQ100 Full1222</span>
			</div>
			<button type="button" aria-label="Synchroniser" className="ml-auto flex w-[49px] items-center justify-center bg-white">
				<Svg w={40} h={36}>
					<path d="M26 4C16 3 10 9 10 20" stroke="#f05050" strokeWidth="5" /><path d="M2 18h16l-8 12z" fill="#f05050" />
					<path d="M14 32c10 1 16-5 16-16" stroke="#10b020" strokeWidth="5" /><path d="M22 18h16L30 6z" fill="#10b020" />
				</Svg>
			</button>
		</header>
	);
}

const orderBox = 'rounded border-2 border-[#94a4ac] bg-white text-right';
const orderButton = 'flex items-center justify-center rounded border-2 border-[#98a0a0] bg-linear-to-b from-white to-[#e4e4e4]';

function TradingBar() {
	const [quantity, setQuantity] = useState('1');
	const [loss, setLoss] = useState('100');

	return (
		<div className="flex h-[94px] bg-white text-[20px] whitespace-nowrap">
			<div className="flex w-[1609px] items-center pl-3">
				<span className="w-[143px]">Portefeuille :</span>
				<span className="w-[131px] text-[19px] font-bold">4 912,84 €</span>
				<span className="w-[143px]">Gain latent :</span>
				<span className="w-[139px] text-[19px] font-bold text-[#58f058]">105,47 pts</span>
				<span className="w-[126px]">Gain Jour :</span>
				<span className="w-[138px] text-[19px] font-bold text-[#58f058]">237,75 pts</span>
				<span className="w-[146px]">Trades jour :</span>
				<span className="flex w-[102px] gap-2"><b className="text-[#50e050]">2</b> / <b>0</b> / <b className="text-[#ff0030]">0</b></span>
				<span className="w-[99px]">Ordres :</span>
				<span className="w-[19px] font-bold text-[#108010]">1</span>
				<DeleteIcon />
				<span className="flex w-[58px] gap-3 pl-5">/ <b>0</b></span>
				<GearsIcon />
				<span className="ml-5 w-[108px]">Position :</span>
				<b className="w-[34px] text-[#a00000]">−1</b>
				<DeleteIcon />
				<span className="flex w-[56px] gap-3 pl-5">/ <b>0</b></span>
				<GearsIcon />
			</div>
			<div className="flex flex-1 gap-1.5 border-l-2 border-[#94a4ac] pl-1.5">
				<div className="flex w-9 flex-col gap-2 pt-2">
					<button type="button" aria-label="Réglages" className={`${orderButton} h-9`}><Svg w={28} h={28}><path d="M4 20l9-9c-1-5 3-9 8-8l-4 5 3 3 5-3c1 5-4 9-8 8l-9 9z" fill="#fff" stroke="#000" strokeWidth="2" /></Svg></button>
					<button type="button" aria-label="Clavier" className="flex h-7 items-center justify-center rounded bg-[#1c64d8]"><Svg w={30} h={24}><path d="M2 5h26M2 11h26" stroke="#fff" strokeWidth="4" strokeDasharray="4 1" /><path d="M8 19h14" stroke="#fff" strokeWidth="4" /></Svg></button>
				</div>
				<label className="flex w-28 flex-col items-center">
					<span className="h-[31px] leading-[31px]">Qté</span>
					<input className={`${orderBox} h-[43px] w-full px-1`} value={quantity} onChange={e => setQuantity(e.target.value)} />
				</label>
				<div className="my-3.5 ml-1 w-0.5 bg-[#94a4ac]" />
				<div className="flex w-[62px] flex-col items-center">
					<span className="h-[31px] leading-[31px]">Limite</span>
					<button type="button" aria-label="Limite" className={`${orderButton} h-[55px] w-14`}><OrderIcon first="down" second="up" /></button>
				</div>
				<div className="my-3.5 w-0.5 bg-[#94a4ac]" />
				<div className="flex w-14 flex-col items-center">
					<span className="h-[31px] leading-[31px]">Stop</span>
					<button type="button" aria-label="Stop" className={`${orderButton} h-[55px] w-14`}><OrderIcon first="up" second="down" /></button>
				</div>
				<div className="my-3.5 w-0.5 bg-[#94a4ac]" />
				<div className="flex w-[235px] flex-col items-center">
					<span className="h-[30px] leading-[31px]">Vente MKT</span>
					<button type="button" aria-label="Vendre au marché" className="h-[58px] w-full rounded border-2 border-[#c04040] bg-linear-to-b from-[#f06060] to-[#d84848] text-[43px] leading-[54px] text-white [text-shadow:0_-2px_1px_#901010]">11 077,00</button>
				</div>
				<div className="flex w-[235px] flex-col items-center">
					<span className="h-[30px] leading-[31px]">Achat MKT</span>
					<button type="button" aria-label="Acheter au marché" className="h-[58px] w-full rounded border-2 border-[#20a020] bg-linear-to-b from-[#40c840] to-[#28b028] text-[43px] leading-[54px] text-white [text-shadow:0_-2px_1px_#006000]">11 077,50</button>
				</div>
				<div className="my-3.5 w-0.5 bg-[#94a4ac]" />
				<div className="flex w-[152px] flex-col gap-1 pt-0.5 pl-3">
					<div className="flex h-[42px] items-center gap-2">
						<input id="target" type="checkbox" className="h-6 w-6 appearance-none rounded border-2 border-[#94a4ac]" />
						<label htmlFor="target" className="w-3">T</label>
						<input aria-label="Points T" className={`${orderBox} h-[42px] w-7 px-1 text-[#98a8b0]`} defaultValue="5" />
						<span>pts</span>
					</div>
					<div className="flex h-[42px] items-center gap-2">
						<input id="stop" type="checkbox" className="h-6 w-6 appearance-none rounded border-2 border-[#94a4ac]" />
						<label htmlFor="stop" className="w-3">S</label>
						<input aria-label="Points S" className={`${orderBox} h-[42px] w-10 px-1 text-[#98a8b0]`} defaultValue="15" />
						<span>pts</span>
					</div>
				</div>
				<div className="w-[3px] bg-[#94a4ac]" />
				<label className="flex w-28 flex-col items-center">
					<span className="h-[31px] leading-[31px]">Perte $</span>
					<input className={`${orderBox} h-[43px] w-full px-2`} value={loss} onChange={e => setLoss(e.target.value)} />
				</label>
				<div className="flex w-[98px] flex-col items-center">
					<span className="h-[31px] leading-[33px]">Qté Auto</span>
					<button type="button" aria-label="Quantité automatique" className={`${orderButton} h-[54px] w-14`}><OrderIcon first="down" second="up" auto /></button>
				</div>
			</div>
		</div>
	);
}

function Legend() {
	const cell = 'flex shrink-0 items-center border-r-2 border-b-2 border-[#94a4ac] bg-[#e4ecf0]';
	return (
		<div className="flex h-9 overflow-hidden border-t-2 border-b-2 border-[#94a4ac] border-b-[#e4ecf0] text-[21px] whitespace-nowrap">
			<button type="button" aria-label="Vendre" className={`${cell} w-[39px] justify-center`}><PageArrow /></button>
			<button type="button" aria-label="Acheter" className={`${cell} w-10 justify-center`}><PageArrow up /></button>
			{legend.map(item => (
				<button type="button" key={item.name} className={`${cell} ${item.width} gap-[7px] pl-1.5`}>
					<span className="flex h-5 w-5 shrink-0">
						{item.colors.map((c, i) => (
							<span key={i} className="h-full flex-1" style={{ background: c }} />
						))}
					</span>
					{item.name}
				</button>
			))}
		</div>
	);
}

function Sidebar() {
	return (
		<nav className="flex w-16 shrink-0 flex-col border-r-2 border-l-2 border-r-[#94a4ac] border-l-[#687c88] bg-[#c8dae4]">
			<button type="button" aria-label="Monter" className="flex h-[26px] items-center justify-center border-b-2 border-[#94a4ac]">
				<Svg w={16} h={8}><path d="M0 8L8 0l8 8z" fill="#94a4ac" /></Svg>
			</button>
			<div className="flex flex-col pt-[5px]">
				{tools.map(([name, icon], i) => (
					<button
						type="button"
						key={name}
						aria-label={name}
						className={`flex h-[52px] items-center justify-center ${i === 1 ? 'mx-1 rounded border-2 border-[#94a4ac] bg-[#b4c4cc]' : ''}`}
					>
						{icon}
					</button>
				))}
			</div>
			<button type="button" aria-label="Descendre" className="mt-auto flex h-7 items-center justify-center border-y-2 border-[#94a4ac] bg-linear-to-b from-[#f0fcff] to-[#c8dae4]">
				<Svg w={18} h={8}><path d="M0 0h18l-9 8z" fill="#000" /></Svg>
			</button>
			<button type="button" aria-label="Plus d'outils" className="flex h-[62px] items-center justify-center">
				<Svg w={40} h={40}>
					<circle cx="8" cy="18" r="4" fill="#404040" /><circle cx="20" cy="18" r="4" fill="#404040" /><circle cx="32" cy="18" r="4" fill="#404040" />
					<path d="M26 29h12l-6 7z" fill="#000" />
				</Svg>
			</button>
		</nav>
	);
}

function Magnifier({ sign }: { sign: string }) {
	return (
		<Svg w={44} h={42}>
			<path d="M24 22l11 13" stroke="#000" strokeWidth="5" />
			<circle cx="17" cy="15" r="11" fill="#f0f4f4" stroke="#222" strokeWidth="2" />
			{sign === 'minus' && <path d="M11 15h12" stroke="#0000ff" strokeWidth="4" />}
			{sign === 'plus' && <path d="M11 15h12M17 9v12" stroke="#0000ff" strokeWidth="4" />}
			{sign === 'fit' && <path d="M37 4v18M33 8l4-4 4 4M33 18l4 4 4-4M3 36h16M7 32l-4 4 4 4M15 32l4 4-4 4" stroke="#0040ff" strokeWidth="2" />}
		</Svg>
	);
}

function BottomBar() {
	return (
		<footer className="flex h-[51px] items-stretch border-t-2 border-b-4 border-t-[#94a4ac] border-b-[#a8bcc8] bg-[#c8dae4] text-[21px] whitespace-nowrap">
			<button type="button" aria-label="Outils de dessin" className="flex w-16 items-center justify-center border-r-2 border-[#94a4ac] bg-[#b4c4cc]">
				<Svg w={44} h={42}>
					<path d="M10 4l16 30" stroke="#e02020" strokeWidth="3" /><path d="M12 12c-4 8-2 20 4 24" stroke="#667" strokeWidth="3" />
					<path d="M36 4l6 3-16 28-6 4 0-8z" fill="#f8c830" stroke="#806010" strokeWidth="2" /><path d="M8 38h18" stroke="#20a040" strokeWidth="3" />
				</Svg>
			</button>
			<button type="button" aria-label="Choisir un outil" className="flex w-[30px] items-center justify-center border-r-2 border-[#94a4ac]"><Caret /></button>
			<button type="button" className="flex w-[187px] items-center gap-2 border-r-2 border-[#94a4ac] bg-[#f0f0f2] pl-2">
				<Svg w={40} h={40}>
					<path d="M1 18C8-2 14 0 20 12s12 14 19-4" stroke="#38b048" strokeWidth="3" /><path d="M1 12c8 8 12-2 18 0s12 12 20 2" stroke="#d04050" strokeWidth="3" />
					<path d="M1 39V28h7v4h7v-4h8v4h8v-5h8v12z" fill="#30b030" /><path d="M8 39v-8h4v8M16 39v-6h6v6M28 39v-8h5v8" fill="#e02020" /><path d="M1 37h38" stroke="#0050d0" strokeWidth="3" />
				</Svg>
				Indicateurs
			</button>
			<button type="button" aria-label="Choisir un indicateur" className="flex w-[30px] items-center justify-center bg-[#f0f0f2]"><Caret /></button>
			<button type="button" aria-label="Partager" className="flex w-[42px] items-center justify-center bg-[#2490d8]">
				<Svg w={32} h={32}>
					<path d="M25 7L7 16l18 9" stroke="#fff" strokeWidth="3" /><circle cx="25" cy="7" r="5" fill="#fff" /><circle cx="6" cy="16" r="5" fill="#fff" /><circle cx="25" cy="25" r="5" fill="#fff" />
				</Svg>
			</button>
			<button type="button" className="flex w-[158px] items-center gap-2.5 border-r-2 border-[#94a4ac] bg-[#f0f0f2] pl-1">
				<Svg w={38} h={38}>
					<path d="M15 5H6v28h9" stroke="#105890" strokeWidth="7" /><path d="M23 5h9v28h-9" stroke="#8c8c98" strokeWidth="7" />
				</Svg>
				Analyser
			</button>
			<div className="flex items-center gap-3 pl-1.5">
				<button type="button" aria-label="Messages"><Svg w={38} h={38}><path d="M4 2h12l6 6v20H4z" fill="#fff" stroke="#aaa" /><rect x="12" y="12" width="24" height="18" rx="3" fill="#3478e0" /><path d="M20 28l6 8 2-8z" fill="#3478e0" /><path d="M17 21h15" stroke="#fff" strokeWidth="3" strokeDasharray="3 2" /></Svg></button>
				<button type="button" aria-label="Liste"><Svg w={38} h={38}><path d="M7 4h26v30H7z" fill="#fff" stroke="#333" strokeWidth="3" /><path d="M10 10h10M10 16h16M14 22h16M20 28h12" stroke="#222" strokeWidth="3" /><path d="M20 5h12l-5 9z" fill="#e04050" /><path d="M8 32l6-9 6 9z" fill="#30c030" /></Svg></button>
				<button type="button" aria-label="Carnet"><Svg w={38} h={38}><path d="M4 4h14v8H4zM8 12h10v6H8zM4 20h14v8H4zM4 28h14v7H4z" fill="#48d848" stroke="#107010" strokeWidth="2" /><path d="M19 5h12v6H19zM19 12h17v7H19zM19 20h12v7H19zM19 28h15v7H19z" fill="#f06070" stroke="#901010" strokeWidth="2" /></Svg></button>
				<button type="button" aria-label="Graphiques"><Svg w={38} h={38}><path d="M2 2h24v22H2z" fill="#fff" stroke="#1040b0" strokeWidth="3" /><path d="M2 4h24" stroke="#1040b0" strokeWidth="5" /><path d="M13 14h23v22H13z" fill="#fff" stroke="#1060d0" strokeWidth="3" /><path d="M13 16h23" stroke="#1060d0" strokeWidth="5" /><path d="M16 30l5-6 6 7 6-8" stroke="#e02020" strokeWidth="2" /></Svg></button>
				<button type="button" aria-label="Réglages du prix"><Svg w={38} h={38}><path d="M9 14v22" stroke="#a01010" strokeWidth="2" /><path d="M3 19h12v12H3z" fill="#f06060" stroke="#a01010" strokeWidth="2" /><path d="M29 1v36" stroke="#109010" strokeWidth="2" /><path d="M22 6h13v25H22z" fill="#58e058" stroke="#109010" strokeWidth="2" /><path d="M6 32l11-11c-1-6 3-9 8-8l-4 5 3 3 5-3c1 5-4 9-8 7L10 36z" fill="#fff" stroke="#000" strokeWidth="2" /></Svg></button>
				<button type="button" aria-label="Replier" className="flex w-8 pl-0.5">
					<Svg w={20} h={22}><path d="M10 1L2 11l8 10M18 1l-8 10 8 10" stroke="#667" strokeWidth="2" /></Svg>
				</button>
			</div>
			<div className="my-[7px] flex flex-1 border-y-2 border-[#94a4ac]">
				<button type="button" aria-label="Défiler à gauche" className="-my-0.5 flex w-[30px] items-center justify-center rounded border-2 border-[#94a4ac] bg-linear-to-b from-[#f0fcff] to-[#c8dae4]"><Svg w={8} h={14}><path d="M8 0v14L0 7z" fill="#000" /></Svg></button>
				<div className="flex-[1083]" />
				<div className="flex-[568] border-l-2 border-[#94a4ac] bg-linear-to-b from-[#f0fcff] to-[#c8dae4]" />
				<button type="button" aria-label="Défiler à droite" className="-my-0.5 flex w-[30px] items-center justify-center rounded border-2 border-[#94a4ac] bg-linear-to-b from-[#f0fcff] to-[#c8dae4]"><Svg w={8} h={14}><path d="M0 0v14l8-7z" fill="#000" /></Svg></button>
			</div>
			<div className="flex w-[374px] items-center gap-2.5 pl-2.5">
				<button type="button" aria-label="Calendrier" className="w-[53px]"><Svg w={42} h={40}><path d="M9 6h31v28H9z" fill="#fff" stroke="#a0b0b8" strokeWidth="2" /><path d="M9 5h31v9H9z" fill="#2088c8" /><path d="M15 1v8M33 1v8" stroke="#a8b8c0" strokeWidth="4" /><path d="M14 19h24M14 25h24M14 31h24" stroke="#b0b8c0" strokeWidth="4" strokeDasharray="4 3" /><rect x="27" y="21" width="6" height="6" fill="#fff" stroke="#ff2020" strokeWidth="2" /><path d="M1 27l12-9v5h14v8H13v6z" fill="#60d850" stroke="#30a030" /></Svg></button>
				<button type="button" aria-label="Annuler" className="w-[42px]"><Svg w={32} h={32}><path d="M2 11L13 2v6c14 0 20 12 9 22 4-9 1-13-9-13v6z" fill="#1068e0" /></Svg></button>
				<button type="button" aria-label="Rétablir" className="w-9"><Svg w={32} h={32}><path d="M30 11L19 2v6C5 8-1 20 10 30c-4-9-1-13 9-13v6z" fill="#8cb4ec" /></Svg></button>
				<button type="button" aria-label="Ajuster" className="w-10"><Magnifier sign="fit" /></button>
				<button type="button" aria-label="Zoom arrière" className="w-[42px]"><Magnifier sign="minus" /></button>
				<button type="button" aria-label="Zoom avant" className="w-11"><Magnifier sign="plus" /></button>
				<button type="button" aria-label="Détacher"><Svg w={40} h={36}><path d="M2 4h36v12H2z" fill="#fff" stroke="#94a4ac" strokeWidth="2" /><path d="M6 10h29" stroke="#333" strokeWidth="6" strokeDasharray="5 3" /><path d="M16 18h8v7h5l-9 9-9-9h5z" fill="#1860d8" /></Svg></button>
			</div>
		</footer>
	);
}

function App() {
	return (
		<div className="flex min-h-screen flex-col bg-[#c8dae4] font-['DejaVu_Sans','Noto_Sans',sans-serif] text-black">
			<TitleBar />
			<div className="flex">
				<Sidebar />
				<main className="min-w-0 flex-1">
					<TradingBar />
					<div className="flex">
						<div className="min-w-0 flex-1">
							<Legend />
							<div className="relative">
								<Plot />
								<Position />
							</div>
							<TimeAxis />
						</div>
						<div className="w-40 shrink-0 bg-white">
							<PriceAxis />
						</div>
					</div>
				</main>
			</div>
			<BottomBar />
		</div>
	);
}

export default App;
